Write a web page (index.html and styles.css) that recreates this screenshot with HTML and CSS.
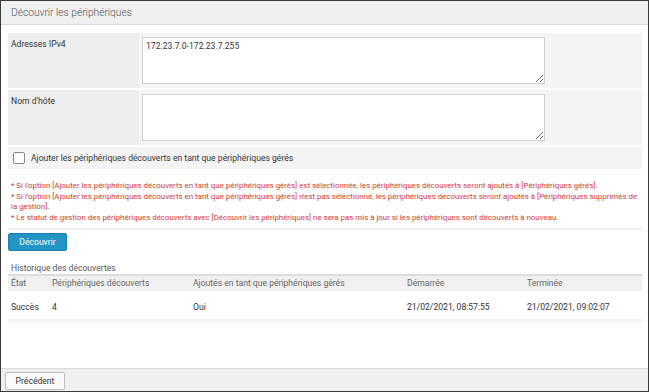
FILE: index.html
```html
<!DOCTYPE html>
<html lang="fr">
<head>
  <meta charset="UTF-8" />
  <title>Découvrir les périphériques</title>
  <link rel="stylesheet" href="styles.css">
</head>
<body>
  <div class="window">
    <div class="title-bar">Découvrir les périphériques</div>

    <div class="content">
      <div class="form">
        <div class="form-row">
          <div class="form-label">Adresses IPv4</div>
          <div class="form-value">
            <textarea class="field">172.23.7.0-172.23.7.255</textarea>
          </div>
        </div>
        <div class="form-row">
          <div class="form-label">Nom d'hôte</div>
          <div class="form-value">
            <textarea class="field"></textarea>
          </div>
        </div>
        <label class="check-row">
          <span class="checkbox"></span>
          Ajouter les périphériques découverts en tant que périphériques gérés
        </label>
      </div>

      <div class="notes">
        <p>* Si l'option [Ajouter les périphériques découverts en tant que périphériques gérés] est sélectionnée, les périphériques découverts seront ajoutés à [Périphériques gérés].</p>
        <p>* Si l'option [Ajouter les périphériques découverts en tant que périphériques gérés] n'est pas sélectionné, les périphériques découverts seront ajoutés à [Périphériques supprimés de la gestion].</p>
        <p>* Le statut de gestion des périphériques découverts avec [Découvrir les périphériques] ne sera pas mis à jour si les périphériques sont découverts à nouveau.</p>
      </div>

      <div class="actions">
        <button class="btn-primary">Découvrir</button>
      </div>

      <div class="history-title">Historique des découvertes</div>
      <table class="history">
        <thead>
          <tr>
            <th class="col-state">État</th>
            <th class="col-found">Périphériques découverts</th>
            <th class="col-added">Ajoutés en tant que périphériques gérés</th>
            <th class="col-start">Démarrée</th>
            <th>Terminée</th>
          </tr>
        </thead>
        <tbody>
          <tr>
            <td>Succès</td>
            <td>4</td>
            <td>Oui</td>
            <td>21/02/2021, 08:57:55</td>
            <td>21/02/2021, 09:02:07</td>
          </tr>
        </tbody>
      </table>
      <div class="table-end"></div>
    </div>

    <div class="footer">
      <button class="btn">Précédent</button>
    </div>
  </div>
</body>
</html>
```

FILE: styles.css
```css
body {
  margin: 0;
  font-family: Roboto, 'Open Sans', sans-serif;
  font-size: 8.6px;
  color: #333;
  background: white;
}
.window {
  box-sizing: border-box;
  width: 649px;
  height: 392px;
  border: 1px solid #3a3a3a;
  display: flex;
  flex-direction: column;
}
.title-bar {
  height: 23px;
  line-height: 23px;
  padding-left: 10px;
  background: #efefef;
  border-bottom: 1px solid #d6d6d6;
  font-size: 10.2px;
  font-weight: 300;
  color: #555;
}
.content {
  flex: 1;
  padding: 8px 6px 0 7px;
}

/* form */
.form-row {
  display: flex;
  margin-bottom: 2px;
  background: #f4f4f4;
}
.form-label {
  width: 128px;
  padding: 6px 0 0 3px;
  background: #eeeeee;
}
.form-value {
  padding: 4px 3px;
}
.field {
  box-sizing: border-box;
  display: block;
  width: 403px;
  height: 47px;
  margin: 0;
  padding: 3px;
  border: 1px solid #d0d0d0;
  font-family: inherit;
  font-size: 8.6px;
  color: #333;
  resize: vertical;
}
.check-row {
  display: flex;
  align-items: center;
  gap: 6px;
  height: 22px;
  padding-left: 5px;
  background: #f4f4f4;
}
.checkbox {
  box-sizing: border-box;
  width: 12px;
  height: 12px;
  border: 1px solid #888;
  border-radius: 2px;
  background: white;
}

/* notes */
.notes {
  margin-top: 12px;
  padding: 0 2px 4px 3px;
  border-bottom: 2px solid #eeeeee;
  color: #d43a30;
  font-size: 7.9px;
  line-height: 10.7px;
}
.notes p {
  margin: 0;
}
.actions {
  padding-top: 3px;
}
.btn-primary {
  width: 59px;
  height: 18px;
  padding: 0;
  border: 1px solid #1a7fae;
  border-radius: 2px;
  background: #2095c6;
  color: white;
  font-family: inherit;
  font-size: 8.6px;
}

/* history */
.history-title {
  margin-top: 12px;
  padding: 0 0 1px 3px;
  border-bottom: 2px solid #dddddd;
  color: #555;
}
.history {
  width: 100%;
  border-collapse: collapse;
}
.history th {
  height: 15px;
  padding: 0 3px;
  background: #f0f0f0;
  color: #666;
  font-weight: normal;
  text-align: left;
}
.history td {
  height: 17px;
  padding: 11px 3px 0;
  vertical-align: top;
}
.col-state { width: 35px; }
.col-found { width: 135px; }
.col-added { width: 208px; }
.col-start { width: 114px; }
.table-end {
  height: 3px;
  background: #f2f2f2;
}

/* footer */
.footer {
  padding: 3px 4px 1px;
  background: #efefef;
  border-top: 1px solid #dadada;
}
.btn {
  width: 60px;
  height: 18px;
  padding: 0;
  border: 1px solid #bdbdbd;
  border-radius: 2px;
  background: #fafafa;
  color: #333;
  font-family: inherit;
  font-size: 8.6px;
}
```
